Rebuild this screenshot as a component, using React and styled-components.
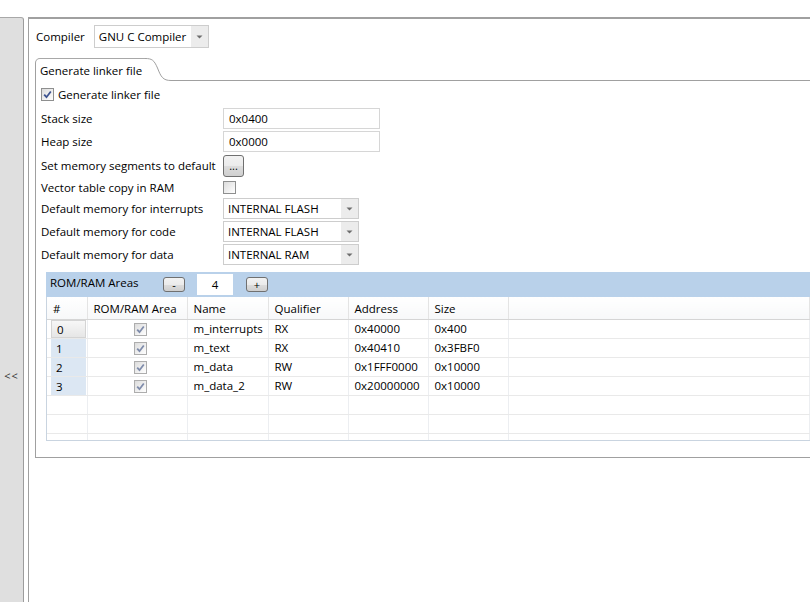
import React from 'react';
import styled, { createGlobalStyle } from 'styled-components';

const GlobalStyle = createGlobalStyle`
  html, body {
    margin: 0;
    padding: 0;
    background: #ffffff;
  }
  body {
    font-family: "Open Sans", "Noto Sans", sans-serif;
    font-size: 11.5px;
    color: #000;
  }
`;

const Page = styled.div`
  display: flex;
  width: 810px;
  height: 602px;
  padding-top: 17px;
  box-sizing: border-box;
  overflow: hidden;
`;

const Sidebar = styled.div`
  flex: none;
  width: 24px;
  background: #dfdfdf;
  border-top: 1px solid #a8a8a8;
  border-right: 1px solid #9c9c9c;
  border-top-right-radius: 3px;
  display: flex;
  justify-content: center;
  padding-top: 350px;
  box-sizing: border-box;
  font-size: 11px;
  color: #333;
  letter-spacing: 1px;
`;

const Main = styled.div`
  flex: 1;
  margin-left: 4px;
  border-left: 1px solid #a0a0a0;
  border-top: 2px solid #a0a0a0;
  padding: 6px 0 0 6px;
  min-width: 0;
`;

const CompilerRow = styled.div`
  display: flex;
  align-items: center;
  height: 23px;
  gap: 9px;
  padding-left: 1px;
`;

const Combo = styled.div`
  display: flex;
  align-items: stretch;
  box-sizing: border-box;
  width: ${p => p.w}px;
  height: ${p => p.h || 21}px;
  border: 1px solid #cdcdcd;
  background: #fff;
`;

const ComboText = styled.div`
  flex: 1;
  display: flex;
  align-items: center;
  padding-left: 4px;
  white-space: nowrap;
`;

const ComboArrow = styled.div`
  width: 17px;
  background: #ececec;
  display: flex;
  align-items: center;
  justify-content: center;
`;

const TabFolder = styled.div`
  margin-top: 10px;
`;

const TabHeader = styled.div`
  display: flex;
  height: 23px;
`;

const Tab = styled.div`
  display: flex;
  align-items: center;
  padding: 0 3px 0 4px;
  border-left: 1px solid #a0a0a0;
  border-top: 1px solid #a8a8a8;
  border-top-left-radius: 5px;
  white-space: nowrap;
`;

const TabFiller = styled.div`
  flex: 1;
  border-bottom: 1px solid #a0a0a0;
`;

const TabBody = styled.div`
  border-left: 1px solid #a0a0a0;
  border-bottom: 1px solid #a0a0a0;
  padding: 5px 0 16px 5px;
`;

const CheckRow = styled.label`
  display: flex;
  align-items: center;
  gap: 4px;
  height: 16px;
`;

const Box = styled.span`
  flex: none;
  display: inline-flex;
  align-items: center;
  justify-content: center;
  width: 13px;
  height: 13px;
  box-sizing: border-box;
  border: 1px solid ${p => (p.dim ? '#adadad' : '#8e8f8f')};
  background: linear-gradient(135deg, #dcdcdc, #ffffff);
`;

const FormRow = styled.div`
  display: grid;
  grid-template-columns: 182px auto;
  align-items: center;
  height: ${p => p.h}px;
  margin-top: ${p => p.mt}px;
  white-space: nowrap;
`;

const TextInput = styled.div`
  box-sizing: border-box;
  width: 157px;
  height: 21px;
  border: 1px solid #d6d6d6;
  display: flex;
  align-items: center;
  padding-left: 5px;
`;

const SmallButton = styled.div`
  box-sizing: border-box;
  width: ${p => p.w}px;
  height: ${p => p.h}px;
  border: 1px solid #707070;
  border-radius: 3px;
  background: linear-gradient(#f2f2f2, #ebebeb 50%, #dddddd 51%, #cfcfcf);
  display: flex;
  align-items: center;
  justify-content: center;
  line-height: 1;
  font-size: 11px;
`;

const Areas = styled.div`
  margin-top: 7px;
  margin-left: 5px;
`;

const Band = styled.div`
  display: flex;
  align-items: center;
  height: 25px;
  background: #b9d1ea;
  padding-left: 4px;
`;

const BandLabel = styled.div`
  width: 113px;
  white-space: nowrap;
  margin-top: -5px;
`;

const SpinValue = styled.div`
  width: 36px;
  height: 21px;
  background: #fff;
  display: flex;
  align-items: center;
  justify-content: center;
  margin: 0 13px 0 12px;
`;

const TableWrap = styled.div`
  height: 143px;
  overflow: hidden;
  border-left: 1px solid #c9d4e0;
  border-bottom: 1px solid #c9d4e0;
`;

const Table = styled.table`
  width: 100%;
  border-collapse: collapse;
  table-layout: fixed;
`;

const Th = styled.th`
  height: 22px;
  padding: 0 0 0 6px;
  text-align: left;
  font-weight: normal;
  border-right: 1px solid #e4e4e4;
  border-bottom: 1px solid #d5d5d5;
  background: linear-gradient(#ffffff, #f7f8f9);
  white-space: nowrap;
  overflow: hidden;
`;

const Td = styled.td`
  height: 18px;
  padding: 0 0 0 6px;
  border-right: 1px solid #eceef1;
  border-bottom: 1px solid #e9e9e9;
  text-align: ${p => (p.center ? 'center' : 'left')};
  white-space: nowrap;
  overflow: hidden;
  line-height: 1;
`;

const IndexCell = styled.td`
  height: 18px;
  padding: 0 1px 0 4px;
  border-right: 1px solid #eceef1;
  border-bottom: 1px solid #e9e9e9;
`;

const IndexMark = styled.div`
  height: 18px;
  display: flex;
  align-items: center;
  padding-left: 5px;
  box-sizing: border-box;
  background: ${p => (p.focused ? 'linear-gradient(#f7f7f7, #e6e6e6)' : '#dce7f3')};
  border: ${p => (p.focused ? '1px solid #d4d4d4' : 'none')};
`;

const Arrow = () => (
  <svg width="7" height="4" viewBox="0 0 7 4">
    <path d="M0.5 0.5 L6.5 0.5 L3.5 3.5 Z" fill="#6d6d6d" />
  </svg>
);

const Check = ({ on, dim }) => (
  <Box dim={dim}>
    {on && (
      <svg width="9" height="9" viewBox="0 0 9 9">
        <path
          d="M1.2 4.6 L3.5 7.2 L7.8 1.5"
          fill="none"
          stroke={dim ? '#7f8cab' : '#3d5390'}
          strokeWidth="1.8"
        />
      </svg>
    )}
  </Box>
);

const TabCurve = () => (
  <svg width="26" height="23" viewBox="0 0 26 23">
    <path
      d="M0 0.5 C7 0.5 9 2 12.5 10 C16 19 18 22.5 26 22.5"
      fill="none"
      stroke="#a0a0a0"
      strokeWidth="1"
    />
  </svg>
);

const areas = [
  { name: 'm_interrupts', q: 'RX', addr: '0x40000', size: '0x400' },
  { name: 'm_text', q: 'RX', addr: '0x40410', size: '0x3FBF0' },
  { name: 'm_data', q: 'RW', addr: '0x1FFF0000', size: '0x10000' },
  { name: 'm_data_2', q: 'RW', addr: '0x20000000', size: '0x10000' },
];

const columns = ['#', 'ROM/RAM Area', 'Name', 'Qualifier', 'Address', 'Size', ''];
const widths = [40, 100, 81, 80, 80, 80];

const App = () => (
  <>
    <GlobalStyle />
    <Page>
      <Sidebar>&lt;&lt;</Sidebar>
      <Main>
        <CompilerRow>
          <span>Compiler</span>
          <Combo w={115} h={23}>
            <ComboText>GNU C Compiler</ComboText>
            <ComboArrow><Arrow /></ComboArrow>
          </Combo>
        </CompilerRow>

        <TabFolder>
          <TabHeader>
            <Tab>Generate linker file</Tab>
            <TabCurve />
            <TabFiller />
          </TabHeader>
          <TabBody>
            <CheckRow>
              <Check on />
              Generate linker file
            </CheckRow>

            <FormRow h={21} mt={6}>
              <span>Stack size</span>
              <TextInput>0x0400</TextInput>
            </FormRow>
            <FormRow h={21} mt={2}>
              <span>Heap size</span>
              <TextInput>0x0000</TextInput>
            </FormRow>
            <FormRow h={23} mt={2}>
              <span>Set memory segments to default</span>
              <SmallButton w={21} h={22}>...</SmallButton>
            </FormRow>
            <FormRow h={16} mt={2}>
              <span>Vector table copy in RAM</span>
              <Check />
            </FormRow>
            <FormRow h={21} mt={3}>
              <span>Default memory for interrupts</span>
              <Combo w={136}>
                <ComboText>INTERNAL FLASH</ComboText>
                <ComboArrow><Arrow /></ComboArrow>
              </Combo>
            </FormRow>
            <FormRow h={21} mt={2}>
              <span>Default memory for code</span>
              <Combo w={136}>
                <ComboText>INTERNAL FLASH</ComboText>
                <ComboArrow><Arrow /></ComboArrow>
              </Combo>
            </FormRow>
            <FormRow h={21} mt={2}>
              <span>Default memory for data</span>
              <Combo w={136}>
                <ComboText>INTERNAL RAM</ComboText>
                <ComboArrow><Arrow /></ComboArrow>
              </Combo>
            </FormRow>

            <Areas>
              <Band>
                <BandLabel>ROM/RAM Areas</BandLabel>
                <SmallButton w={22} h={15}>-</SmallButton>
                <SpinValue>4</SpinValue>
                <SmallButton w={22} h={15}>+</SmallButton>
              </Band>
              <TableWrap>
                <Table>
                  <colgroup>
                    {widths.map((w, i) => <col key={i} style={{ width: w }} />)}
                    <col />
                  </colgroup>
                  <thead>
                    <tr>
                      {columns.map((c, i) => <Th key={i}>{c}</Th>)}
                    </tr>
                  </thead>
                  <tbody>
                    {areas.map((a, i) => (
                      <tr key={i}>
                        <IndexCell>
                          <IndexMark focused={i === 0}>{i}</IndexMark>
                        </IndexCell>
                        <Td center><Check on dim /></Td>
                        <Td>{a.name}</Td>
                        <Td>{a.q}</Td>
                        <Td>{a.addr}</Td>
                        <Td>{a.size}</Td>
                        <Td />
                      </tr>
                    ))}
                    {[0, 1, 2].map(i => (
                      <tr key={`e${i}`}>
                        {columns.map((c, j) => <Td key={j} />)}
                      </tr>
                    ))}
                  </tbody>
                </Table>
              </TableWrap>
            </Areas>
          </TabBody>
        </TabFolder>
      </Main>
    </Page>
  </>
);

export default App;
